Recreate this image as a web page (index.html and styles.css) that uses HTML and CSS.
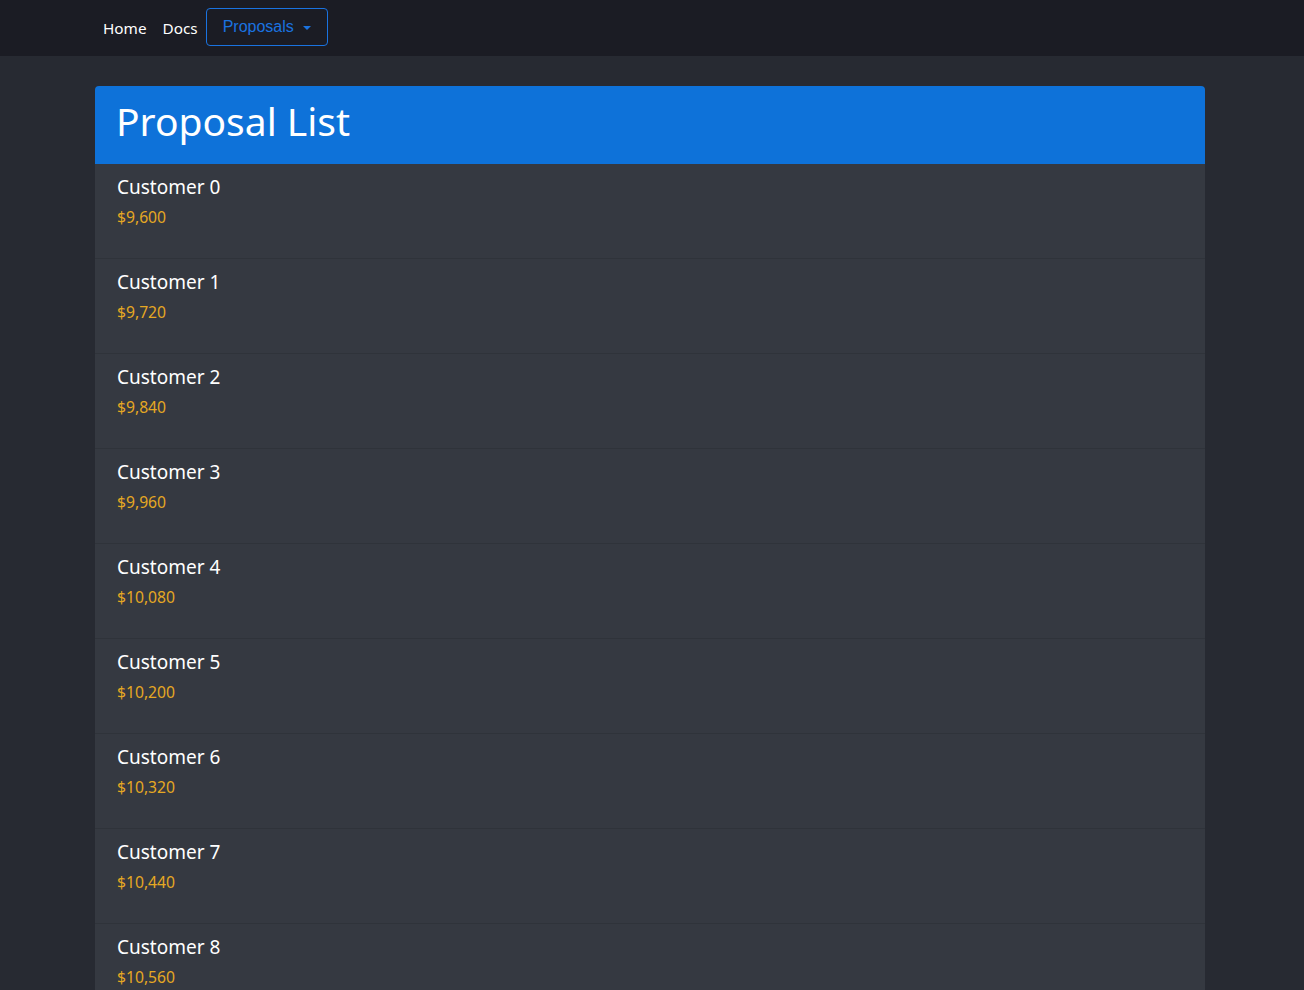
FILE: index.html
```html
<!DOCTYPE html>
<html>
<head>
<meta charset="utf-8">
<link rel="stylesheet" href="styles.css">
</head>
<body>
<nav class="navbar">
  <div class="nav-inner">
    <a class="nav-link" href="#">Home</a>
    <a class="nav-link" href="#">Docs</a>
    <button class="dropdown-btn">Proposals <span class="caret"></span></button>
  </div>
</nav>
<main class="container">
  <section class="card">
    <header class="card-header"><h1>Proposal List</h1></header>
    <ul class="list">
      <li class="item"><div class="name">Customer 0</div><div class="price">$9,600</div></li>
      <li class="item"><div class="name">Customer 1</div><div class="price">$9,720</div></li>
      <li class="item"><div class="name">Customer 2</div><div class="price">$9,840</div></li>
      <li class="item"><div class="name">Customer 3</div><div class="price">$9,960</div></li>
      <li class="item"><div class="name">Customer 4</div><div class="price">$10,080</div></li>
      <li class="item"><div class="name">Customer 5</div><div class="price">$10,200</div></li>
      <li class="item"><div class="name">Customer 6</div><div class="price">$10,320</div></li>
      <li class="item"><div class="name">Customer 7</div><div class="price">$10,440</div></li>
      <li class="item"><div class="name">Customer 8</div><div class="price">$10,560</div></li>
      <li class="item"><div class="name">Customer 9</div><div class="price">$10,680</div></li>
    </ul>
  </section>
</main>
</body>
</html>
```
FILE: styles.css
```css
* { box-sizing: border-box; }
html, body { margin: 0; padding: 0; }
body {
  background: #272a32;
  font-family: "Noto Sans", "Open Sans", sans-serif;
  color: #fff;
}
.navbar {
  background: #1b1c24;
  height: 56px;
}
.nav-inner {
  width: 1110px;
  margin: 0 0 0 95px;
  display: flex;
  align-items: center;
  height: 56px;
}
.nav-link {
  color: #fff;
  text-decoration: none;
  font-size: 15.3px;
  padding: 0 8px;
  line-height: 56px;
}
.dropdown-btn {
  margin-top: -2px;
  height: 38px;
  width: 122px;
  background: transparent;
  border: 1px solid #1a73e0;
  border-radius: 4px;
  color: #1a73e0;
  font-family: "Liberation Sans", Arial, sans-serif;
  font-size: 16px;
  padding: 0 0 0 16px;
  display: flex;
  align-items: center;
  justify-content: flex-start;
  gap: 9px;
}
.caret {
  width: 0; height: 0;
  border-left: 4px solid transparent;
  border-right: 4px solid transparent;
  border-top: 4px solid #1a73e0;
  margin-top: 2px;
}
.container {
  width: 1110px;
  margin: 30px 0 0 95px;
}
.card {
  border-radius: 4px 4px 0 0;
  overflow: hidden;
}
.card-header {
  background: #0e72d9;
  height: 78px;
  padding: 0 21px 10px;
  display: flex;
  align-items: center;
}
.card-header h1 {
  margin: 0;
  font-weight: 400;
  font-size: 39px;
  line-height: 1;
}
.list { list-style: none; margin: 0; padding: 0; }
.item {
  background: #353941;
  height: 95px;
  padding: 11px 22px 0;
  border-bottom: 1px solid #2f333a;
}
.name { font-size: 19px; line-height: 24px; }
.price { color: #e5a823; font-size: 15.7px; line-height: 20px; margin-top: 8px; }
```
